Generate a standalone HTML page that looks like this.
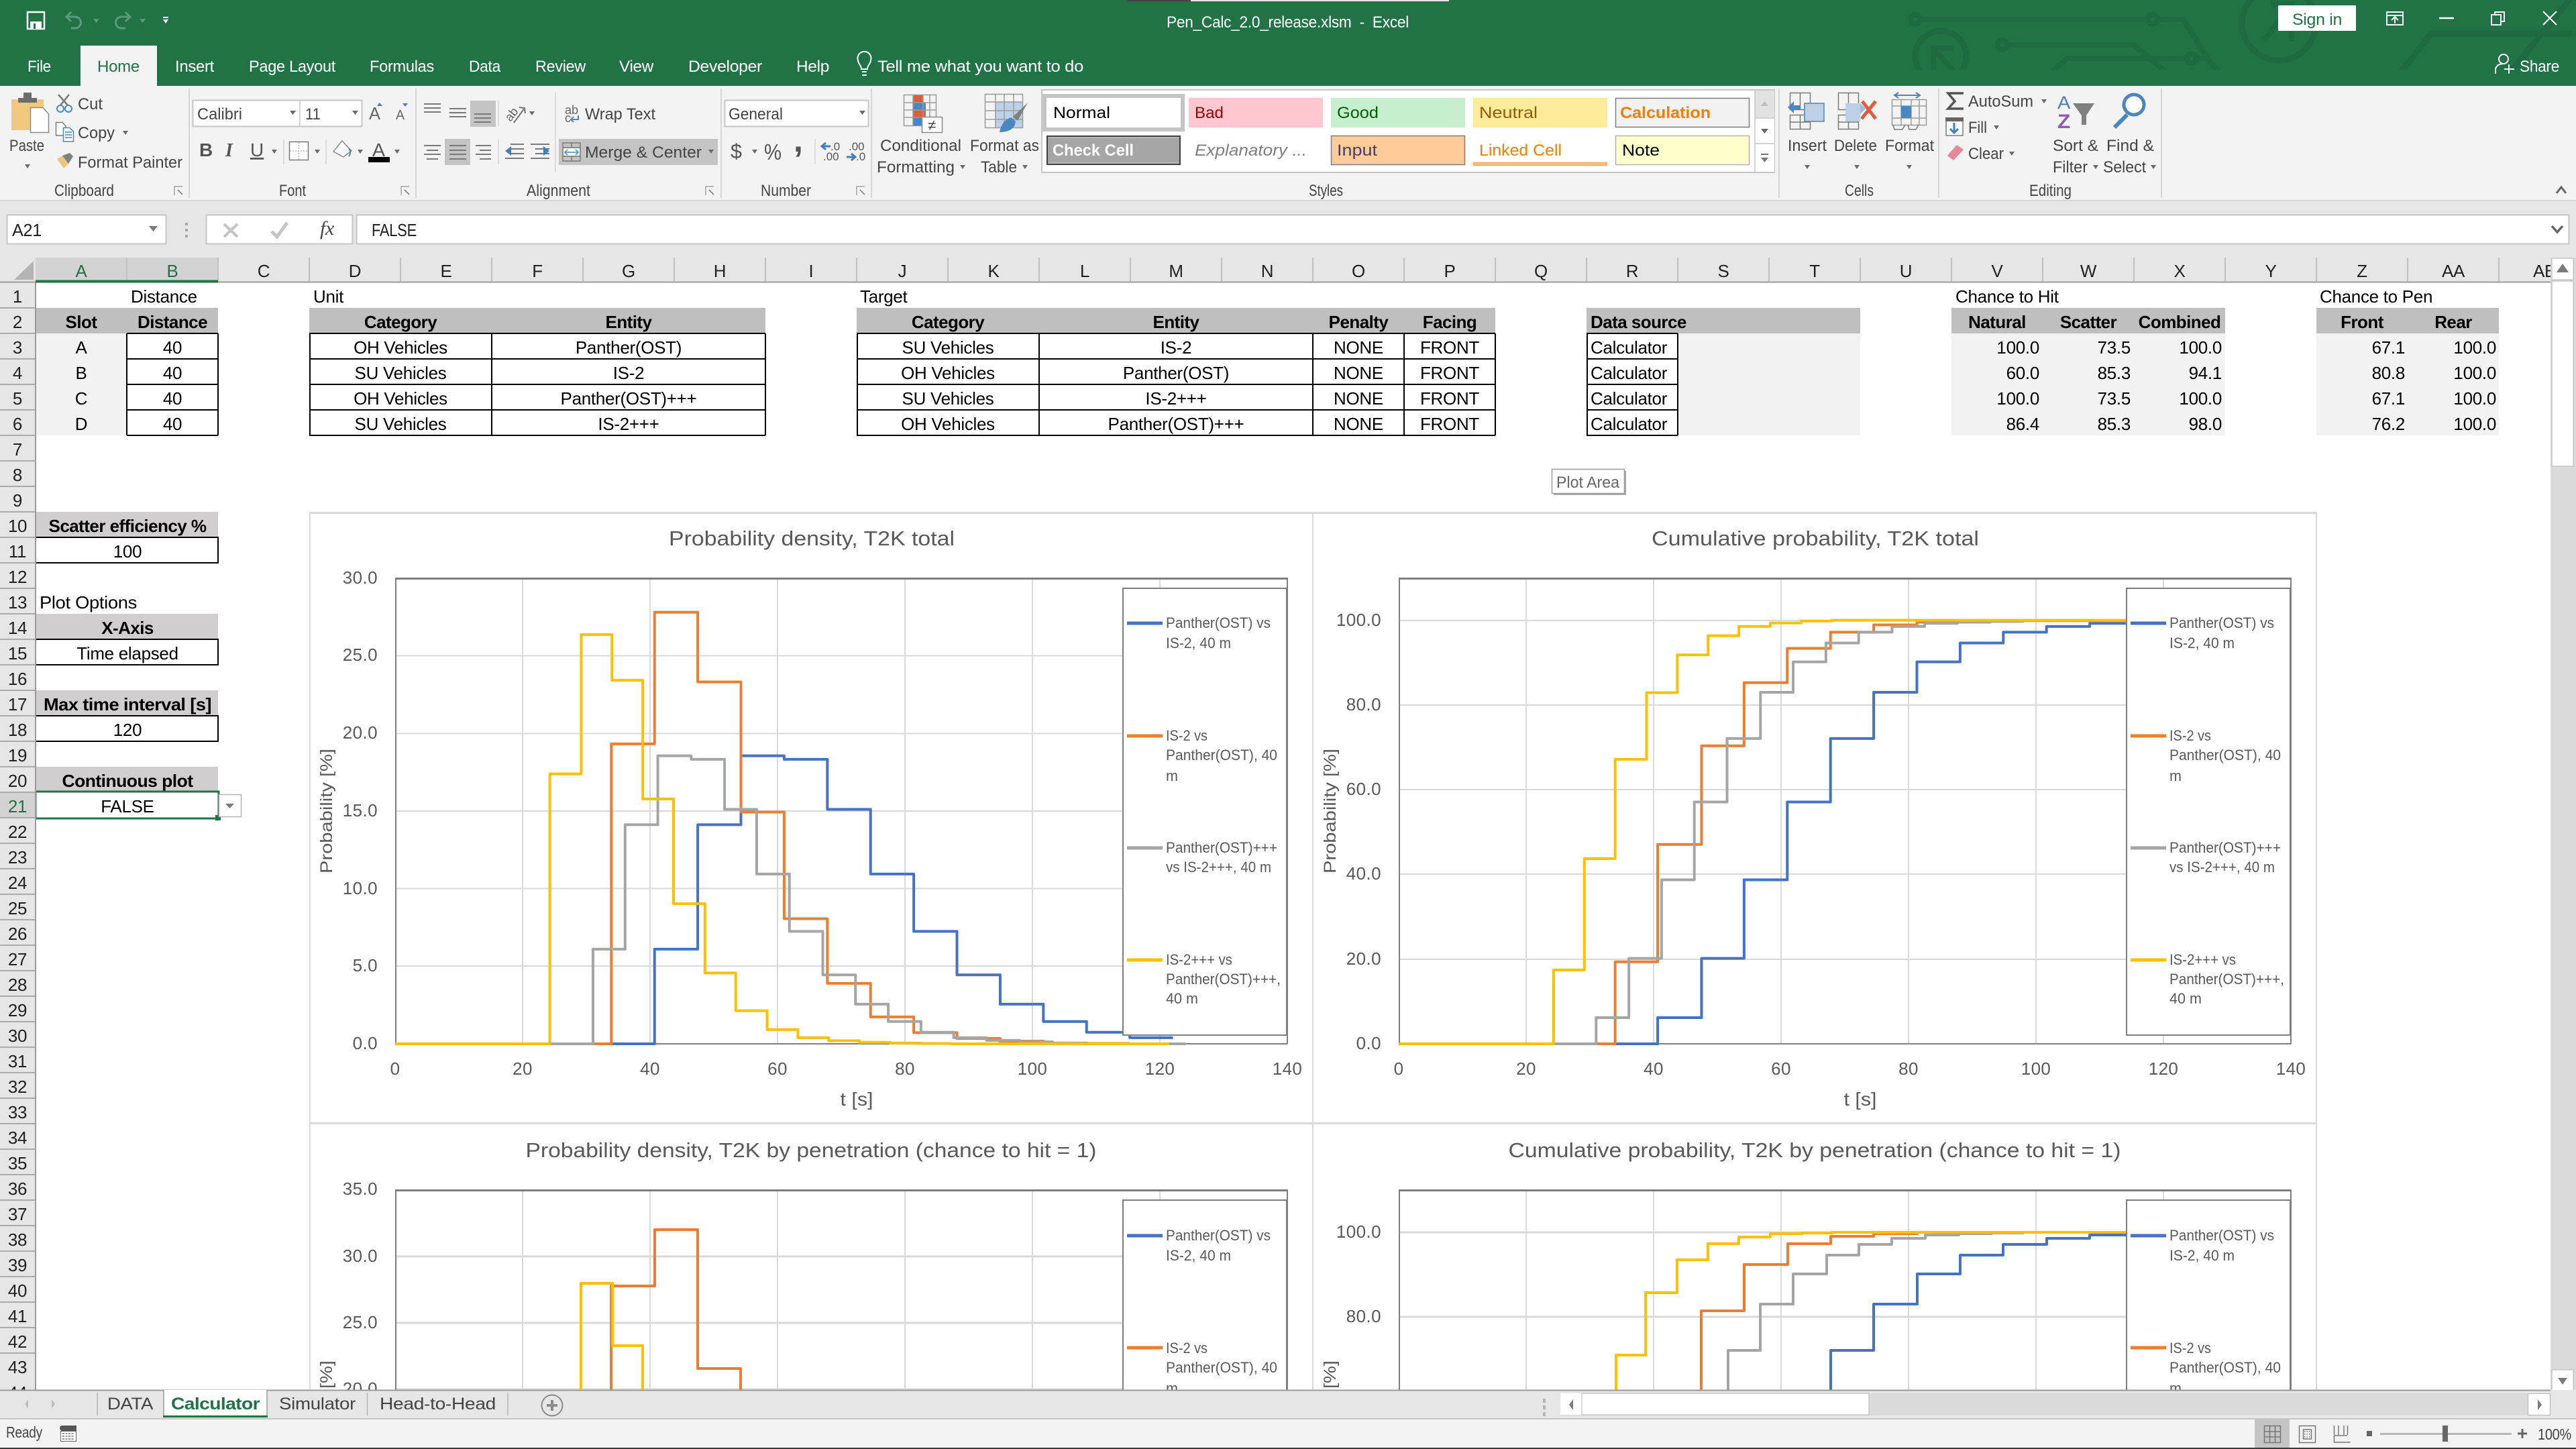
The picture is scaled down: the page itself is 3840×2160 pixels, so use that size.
<!DOCTYPE html>
<html><head><meta charset="utf-8"><title>Pen_Calc_2.0_release.xlsm - Excel</title>
<style>
html,body{margin:0;padding:0;background:#fff;width:3840px;height:2160px;overflow:hidden}
svg{display:block;position:absolute;left:0;top:0}
text{font-family:"Liberation Sans",sans-serif;font-size:26px;fill:#000;letter-spacing:-.3px;white-space:pre}
.c{text-anchor:middle}.r{text-anchor:end}
.b{font-weight:bold;letter-spacing:-.55px}
.w{fill:#fff;font-size:24px}
.t{font-size:24px;fill:#444;letter-spacing:0}
.g{font-size:24px;fill:#444;letter-spacing:0}
.h{fill:#222}
.k{fill:#595959;letter-spacing:.4px}
.l{fill:#595959;font-size:22px;letter-spacing:0}
.ti{fill:#595959;font-size:31px;letter-spacing:0}
.s{fill:none;stroke-linejoin:miter;stroke-linecap:butt}
.cv{fill:none;stroke-width:4;vector-effect:non-scaling-stroke;stroke-linejoin:round}
</style></head><body>
<svg xmlns="http://www.w3.org/2000/svg" width="3840" height="2160" viewBox="0 0 3840 2160">
<defs>
<clipPath id="tb"><rect x="2800" y="0" width="1040" height="104"/></clipPath>
<clipPath id="sh"><rect x="0" y="0" width="3802" height="2072"/></clipPath>
</defs>
<rect width="3840" height="2160" fill="#fff"/>

<!-- ======= sheet cells ======= -->
<g id="cells">
<rect x="53" y="459" width="272" height="38" fill="#bfbfbf"/>
<rect x="53" y="497" width="136" height="152" fill="#f2f2f2"/>
<rect x="461" y="459" width="680" height="38" fill="#bfbfbf"/>
<rect x="1277" y="459" width="952" height="38" fill="#bfbfbf"/>
<rect x="2365" y="459" width="408" height="38" fill="#bfbfbf"/>
<rect x="2501" y="497" width="272" height="152" fill="#f2f2f2"/>
<rect x="2909" y="459" width="408" height="38" fill="#bfbfbf"/>
<rect x="2909" y="497" width="408" height="152" fill="#f2f2f2"/>
<rect x="3453" y="459" width="272" height="38" fill="#bfbfbf"/>
<rect x="3453" y="497" width="272" height="152" fill="#f2f2f2"/>
<path class="s" stroke="#000" stroke-width="2" d="M189 497H325M189 535H325M189 573H325M189 611H325M189 649H325M189 497V649M325 497V649M461 497H1141M461 535H1141M461 573H1141M461 611H1141M461 649H1141M462 497V649M733 497V649M1141 497V649M1277 497H2229M1277 535H2229M1277 573H2229M1277 611H2229M1277 649H2229M1278 497V649M1549 497V649M1957 497V649M2093 497V649M2229 497V649M2365 497H2501M2365 535H2501M2365 573H2501M2365 611H2501M2365 649H2501M2366 497V649M2501 497V649"/>

<text x="195" y="451">Distance</text>
<text x="467" y="451">Unit</text>
<text x="1282" y="451">Target</text>
<text x="2915" y="451">Chance to Hit</text>
<text x="3458" y="451">Chance to Pen</text>

<g class="c">
<text class="c b" x="121" y="489">Slot</text><text class="c b" x="257" y="489">Distance</text>
<text class="c b" x="597" y="489">Category</text><text class="c b" x="937" y="489">Entity</text>
<text class="c b" x="1413" y="489">Category</text><text class="c b" x="1753" y="489">Entity</text>
<text class="c b" x="2025" y="489">Penalty</text><text class="c b" x="2161" y="489">Facing</text>
<text class="c b" x="2977" y="489">Natural</text><text class="c b" x="3113" y="489">Scatter</text><text class="c b" x="3249" y="489">Combined</text>
<text class="c b" x="3521" y="489">Front</text><text class="c b" x="3657" y="489">Rear</text>
<text class="c" x="121" y="527">A</text><text class="c" x="121" y="565">B</text><text class="c" x="121" y="603">C</text><text class="c" x="121" y="641">D</text>
<text class="c" x="257" y="527">40</text><text class="c" x="257" y="565">40</text><text class="c" x="257" y="603">40</text><text class="c" x="257" y="641">40</text>
<text class="c" x="597" y="527">OH Vehicles</text><text class="c" x="597" y="565">SU Vehicles</text><text class="c" x="597" y="603">OH Vehicles</text><text class="c" x="597" y="641">SU Vehicles</text>
<text class="c" x="937" y="527">Panther(OST)</text><text class="c" x="937" y="565">IS-2</text><text class="c" x="937" y="603">Panther(OST)+++</text><text class="c" x="937" y="641">IS-2+++</text>
<text class="c" x="1413" y="527">SU Vehicles</text><text class="c" x="1413" y="565">OH Vehicles</text><text class="c" x="1413" y="603">SU Vehicles</text><text class="c" x="1413" y="641">OH Vehicles</text>
<text class="c" x="1753" y="527">IS-2</text><text class="c" x="1753" y="565">Panther(OST)</text><text class="c" x="1753" y="603">IS-2+++</text><text class="c" x="1753" y="641">Panther(OST)+++</text>
<text class="c" x="2025" y="527">NONE</text><text class="c" x="2025" y="565">NONE</text><text class="c" x="2025" y="603">NONE</text><text class="c" x="2025" y="641">NONE</text>
<text class="c" x="2161" y="527">FRONT</text><text class="c" x="2161" y="565">FRONT</text><text class="c" x="2161" y="603">FRONT</text><text class="c" x="2161" y="641">FRONT</text>
</g>
<text class="b" x="2371" y="489">Data source</text>
<text x="2371" y="527">Calculator</text><text x="2371" y="565">Calculator</text><text x="2371" y="603">Calculator</text><text x="2371" y="641">Calculator</text>
<text class="r" x="3040" y="527">100.0</text><text class="r" x="3040" y="565">60.0</text><text class="r" x="3040" y="603">100.0</text><text class="r" x="3040" y="641">86.4</text>
<text class="r" x="3176" y="527">73.5</text><text class="r" x="3176" y="565">85.3</text><text class="r" x="3176" y="603">73.5</text><text class="r" x="3176" y="641">85.3</text>
<text class="r" x="3312" y="527">100.0</text><text class="r" x="3312" y="565">94.1</text><text class="r" x="3312" y="603">100.0</text><text class="r" x="3312" y="641">98.0</text>
<text class="r" x="3585" y="527">67.1</text><text class="r" x="3585" y="565">80.8</text><text class="r" x="3585" y="603">67.1</text><text class="r" x="3585" y="641">76.2</text>
<text class="r" x="3721" y="527">100.0</text><text class="r" x="3721" y="565">100.0</text><text class="r" x="3721" y="603">100.0</text><text class="r" x="3721" y="641">100.0</text>

<!-- left option blocks -->
<rect x="54" y="763" width="271" height="38" fill="#d0cece"/>
<rect x="54" y="915" width="271" height="38" fill="#d0cece"/>
<rect x="54" y="1029" width="271" height="38" fill="#d0cece"/>
<rect x="54" y="1143" width="271" height="38" fill="#d0cece"/>
<path class="s" stroke="#000" stroke-width="2" d="M54 801H325V839H54M54 953H325V991H54M54 1067H325V1105H54"/>
<text class="c b" x="190" y="793" textLength="235" lengthAdjust="spacingAndGlyphs">Scatter efficiency %</text>
<text class="c" x="190" y="831">100</text>
<text x="59" y="907" textLength="145" lengthAdjust="spacingAndGlyphs">Plot Options</text>
<text class="c b" x="190" y="945">X-Axis</text>
<text class="c" x="190" y="983">Time elapsed</text>
<text class="c b" x="190" y="1059" textLength="250" lengthAdjust="spacingAndGlyphs">Max time interval [s]</text>
<text class="c" x="190" y="1097">120</text>
<text class="c b" x="190" y="1173" textLength="195" lengthAdjust="spacingAndGlyphs">Continuous plot</text>
<text class="c" x="190" y="1211">FALSE</text>
<rect x="53" y="1180" width="273" height="40" fill="none" stroke="#217346" stroke-width="3"/>
<rect x="321" y="1215" width="8" height="8" fill="#217346"/>
<rect x="326.500" y="1184.500" width="33" height="33" fill="#fff" stroke="#b5b5b5" stroke-width="1.5"/>
<path d="M336 1198h13l-6.500 7z" fill="#7a7a7a"/>

<!-- Plot Area tooltip -->
<rect x="2316" y="702" width="108" height="36" fill="#aaa"/>
<rect x="2313.500" y="699.500" width="108" height="36" fill="#fff" stroke="#9a9a9a" stroke-width="1.500"/>
<text class="c" x="2367" y="727" style="font-size:24px;fill:#666;letter-spacing:0" textLength="94" lengthAdjust="spacingAndGlyphs">Plot Area</text>
</g>

<!-- ======= charts ======= -->
<g clip-path="url(#sh)">
<path class="s" stroke="#d9d9d9" stroke-width="2" d="M462 763V2072M1957 763V2072M3453 763V2072"/>
<path class="s" stroke="#d9d9d9" stroke-width="3" d="M461 764.500H3454M461 1674.500H3454"/>

<!-- chart 1 -->
<text class="c ti" x="1210" y="813" textLength="426" lengthAdjust="spacingAndGlyphs">Probability density, T2K total</text>
<path class="s" stroke="#d9d9d9" stroke-width="2" d="M779 862V1556M969 862V1556M1159 862V1556M1349 862V1556M1539 862V1556M1729 862V1556M589 977.500H1919M589 1093.500H1919M589 1209H1919M589 1324.500H1919M589 1440H1919"/>
<path class="s" stroke="#7f7f7f" stroke-width="2" d="M590 862V1556M1919 862V1556M589 1556H1919"/>
<path class="s" stroke="#7f7f7f" stroke-width="3" d="M589 862.500H1920"/>
<g transform="translate(440,780) scale(.9758,.57398)">
<path class="cv" stroke="#4472c4" d="M153 1352H549V1106H615V783H681V604H747V613H813V743H879V911H945V1060H1011V1173H1077V1249H1143V1294H1209V1322H1275V1336H1341"/>
<path class="cv" stroke="#ed7d31" d="M153 1352H483V573H549V231H615V412H681V750H747V1027H813V1195H879V1282H945V1323H1011V1338H1077V1345H1143V1350H1209V1351H1275"/>
<path class="cv" stroke="#a5a5a5" d="M153 1352H455V1106H504V783H554V604H605V613H656V743H705V911H755V1060H806V1173H856V1249H906V1294H956V1322H1006V1336H1056V1343H1107V1347H1157V1350H1207V1352H1360"/>
<path class="cv" stroke="#ffc000" d="M153 1352H389V651H437V289H484V408H531V716H578V988H626V1168H673V1266H721V1315H768V1336H815V1344H862V1348H909V1350H956V1351H1003V1352H1335"/>
</g>
<rect x="1674" y="877" width="244" height="666" fill="#fff" stroke="#7f7f7f" stroke-width="2"/>
<path class="s" stroke-width="5" stroke="#4472c4" d="M1680 929H1733"/><path class="s" stroke-width="5" stroke="#ed7d31" d="M1680 1097H1733"/><path class="s" stroke-width="5" stroke="#a5a5a5" d="M1680 1264H1733"/><path class="s" stroke-width="5" stroke="#ffc000" d="M1680 1431H1733"/>
<text class="l" x="1738" y="936" textLength="156" lengthAdjust="spacingAndGlyphs">Panther(OST) vs</text>
<text class="l" x="1738" y="966" textLength="97" lengthAdjust="spacingAndGlyphs">IS-2, 40 m</text>
<text class="l" x="1738" y="1104" textLength="62" lengthAdjust="spacingAndGlyphs">IS-2 vs</text>
<text class="l" x="1738" y="1133" textLength="166" lengthAdjust="spacingAndGlyphs">Panther(OST), 40</text>
<text class="l" x="1738" y="1164" textLength="18" lengthAdjust="spacingAndGlyphs">m</text>
<text class="l" x="1738" y="1271" textLength="166" lengthAdjust="spacingAndGlyphs">Panther(OST)+++</text>
<text class="l" x="1738" y="1300" textLength="157" lengthAdjust="spacingAndGlyphs">vs IS-2+++, 40 m</text>
<text class="l" x="1738" y="1438" textLength="99" lengthAdjust="spacingAndGlyphs">IS-2+++ vs</text>
<text class="l" x="1738" y="1467" textLength="171" lengthAdjust="spacingAndGlyphs">Panther(OST)+++,</text>
<text class="l" x="1738" y="1496" textLength="48" lengthAdjust="spacingAndGlyphs">40 m</text>
<g>
<text class="r k" x="563" y="870">30.0</text><text class="r k" x="563" y="985">25.0</text><text class="r k" x="563" y="1101">20.0</text><text class="r k" x="563" y="1217">15.0</text><text class="r k" x="563" y="1333">10.0</text><text class="r k" x="563" y="1448">5.0</text><text class="r k" x="563" y="1564">0.0</text>
<text class="c k" x="589" y="1602">0</text><text class="c k" x="779" y="1602">20</text><text class="c k" x="969" y="1602">40</text><text class="c k" x="1159" y="1602">60</text><text class="c k" x="1349" y="1602">80</text><text class="c k" x="1539" y="1602">100</text><text class="c k" x="1729" y="1602">120</text><text class="c k" x="1919" y="1602">140</text>
<text class="c k" x="1277" y="1648" style="font-size:28px;letter-spacing:0" textLength="49" lengthAdjust="spacingAndGlyphs">t [s]</text>
<text class="c k" transform="translate(495,1209) rotate(-90)" style="letter-spacing:0;font-size:25px" textLength="186" lengthAdjust="spacingAndGlyphs">Probability [%]</text>
</g>

<!-- chart 2 -->
<text class="c ti" x="2706" y="813" textLength="488" lengthAdjust="spacingAndGlyphs">Cumulative probability, T2K total</text>
<path class="s" stroke="#d9d9d9" stroke-width="2" d="M2275 862V1556M2465 862V1556M2655 862V1556M2845 862V1556M3035 862V1556M3225 862V1556M2085 925H3415M2085 1051H3415M2085 1177H3415M2085 1303H3415M2085 1430H3415"/>
<path class="s" stroke="#7f7f7f" stroke-width="2" d="M2086 862V1556M3415 862V1556M2085 1556H3415"/>
<path class="s" stroke="#7f7f7f" stroke-width="3" d="M2085 862.500H3416"/>
<g transform="translate(1950,780) scale(.9758,.57398)">
<path class="cv" stroke="#4472c4" d="M139 1352H534V1284H601V1130H666V926H732V724H798V559H864V439H930V360H996V311H1062V283H1128V268H1194V260H1249"/>
<path class="cv" stroke="#ed7d31" d="M139 1352H469V1139H534V834H601V578H666V414H732V325H798V283H864V264H930V257H996V254H1062V253H1249"/>
<path class="cv" stroke="#a5a5a5" d="M139 1352H440V1284H490V1130H540V926H590V724H640V559H691V439H741V360H791V311H841V283H892V268H942V260H992V257H1042V255H1093"/>
<path class="cv" stroke="#ffc000" d="M139 1352H375V1160H422V871H469V613H517V440H564V342H611V292H658V268H706V259H753V254H800V252H1249"/>
</g>
<rect x="3170" y="877" width="244" height="666" fill="#fff" stroke="#7f7f7f" stroke-width="2"/>
<path class="s" stroke-width="5" stroke="#4472c4" d="M3176 929H3229"/><path class="s" stroke-width="5" stroke="#ed7d31" d="M3176 1097H3229"/><path class="s" stroke-width="5" stroke="#a5a5a5" d="M3176 1264H3229"/><path class="s" stroke-width="5" stroke="#ffc000" d="M3176 1431H3229"/>
<text class="l" x="3234" y="936" textLength="156" lengthAdjust="spacingAndGlyphs">Panther(OST) vs</text>
<text class="l" x="3234" y="966" textLength="97" lengthAdjust="spacingAndGlyphs">IS-2, 40 m</text>
<text class="l" x="3234" y="1104" textLength="62" lengthAdjust="spacingAndGlyphs">IS-2 vs</text>
<text class="l" x="3234" y="1133" textLength="166" lengthAdjust="spacingAndGlyphs">Panther(OST), 40</text>
<text class="l" x="3234" y="1164" textLength="18" lengthAdjust="spacingAndGlyphs">m</text>
<text class="l" x="3234" y="1271" textLength="166" lengthAdjust="spacingAndGlyphs">Panther(OST)+++</text>
<text class="l" x="3234" y="1300" textLength="157" lengthAdjust="spacingAndGlyphs">vs IS-2+++, 40 m</text>
<text class="l" x="3234" y="1438" textLength="99" lengthAdjust="spacingAndGlyphs">IS-2+++ vs</text>
<text class="l" x="3234" y="1467" textLength="171" lengthAdjust="spacingAndGlyphs">Panther(OST)+++,</text>
<text class="l" x="3234" y="1496" textLength="48" lengthAdjust="spacingAndGlyphs">40 m</text>
<text class="r k" x="2059" y="933">100.0</text><text class="r k" x="2059" y="1059">80.0</text><text class="r k" x="2059" y="1185">60.0</text><text class="r k" x="2059" y="1311">40.0</text><text class="r k" x="2059" y="1438">20.0</text><text class="r k" x="2059" y="1564">0.0</text>
<text class="c k" x="2085" y="1602">0</text><text class="c k" x="2275" y="1602">20</text><text class="c k" x="2465" y="1602">40</text><text class="c k" x="2655" y="1602">60</text><text class="c k" x="2845" y="1602">80</text><text class="c k" x="3035" y="1602">100</text><text class="c k" x="3225" y="1602">120</text><text class="c k" x="3415" y="1602">140</text>
<text class="c k" x="2773" y="1648" style="font-size:28px;letter-spacing:0" textLength="49" lengthAdjust="spacingAndGlyphs">t [s]</text>
<text class="c k" transform="translate(1991,1209) rotate(-90)" style="letter-spacing:0;font-size:25px" textLength="186" lengthAdjust="spacingAndGlyphs">Probability [%]</text>

<!-- chart 3 -->
<text class="c ti" x="1209" y="1725" textLength="851" lengthAdjust="spacingAndGlyphs">Probability density, T2K by penetration (chance to hit = 1)</text>
<path class="s" stroke="#d9d9d9" stroke-width="2" d="M779 1774V2072M969 1774V2072M1159 1774V2072M1349 1774V2072M1539 1774V2072M1729 1774V1790"/>
<path class="s" stroke="#d9d9d9" stroke-width="3" d="M589 1873H1674M589 1972H1674M589 2071H1674"/>
<path class="s" stroke="#7f7f7f" stroke-width="2" d="M590 1774V2072M1919 1774V2072"/>
<path class="s" stroke="#7f7f7f" stroke-width="3" d="M589 1774.500H1920"/>
<path class="cv" stroke="#ed7d31" d="M911 2072V1917H976V1833H1040V2040H1104V2072"/>
<path class="cv" stroke="#ffc000" d="M866 2072V1913H913V2006H958V2072"/>
<rect x="1674" y="1789" width="244" height="300" fill="#fff" stroke="#7f7f7f" stroke-width="2"/>
<path class="s" stroke-width="5" stroke="#4472c4" d="M1680 1842H1733"/><path class="s" stroke-width="5" stroke="#ed7d31" d="M1680 2009H1733"/>
<text class="l" x="1738" y="1849" textLength="156" lengthAdjust="spacingAndGlyphs">Panther(OST) vs</text>
<text class="l" x="1738" y="1879" textLength="97" lengthAdjust="spacingAndGlyphs">IS-2, 40 m</text>
<text class="l" x="1738" y="2017" textLength="62" lengthAdjust="spacingAndGlyphs">IS-2 vs</text>
<text class="l" x="1738" y="2046" textLength="166" lengthAdjust="spacingAndGlyphs">Panther(OST), 40</text>
<text class="l" x="1738" y="2077" textLength="18" lengthAdjust="spacingAndGlyphs">m</text>
<text class="r k" x="563" y="1781">35.0</text><text class="r k" x="563" y="1881">30.0</text><text class="r k" x="563" y="1980">25.0</text><text class="r k" x="563" y="2079">20.0</text>
<text class="c k" transform="translate(495,2121) rotate(-90)" style="letter-spacing:0;font-size:25px" textLength="186" lengthAdjust="spacingAndGlyphs">Probability [%]</text>

<!-- chart 4 -->
<text class="c ti" x="2705" y="1725" textLength="913" lengthAdjust="spacingAndGlyphs">Cumulative probability, T2K by penetration (chance to hit = 1)</text>
<path class="s" stroke="#d9d9d9" stroke-width="2" d="M2275 1774V2072M2465 1774V2072M2655 1774V2072M2845 1774V2072M3035 1774V2072M3225 1774V1790"/>
<path class="s" stroke="#d9d9d9" stroke-width="3" d="M2085 1837H3170M2085 1963H3170"/>
<path class="s" stroke="#7f7f7f" stroke-width="2" d="M2086 1774V2072M3415 1774V2072"/>
<path class="s" stroke="#7f7f7f" stroke-width="3" d="M2085 1774.500H3416"/>
<path class="cv" stroke="#4472c4" d="M2729 2072V2013H2793V1944H2858V1899H2922V1871H2986V1855H3051V1846H3115V1841H3170"/>
<path class="cv" stroke="#a5a5a5" d="M2576 2072V2013H2624V1944H2673V1899H2723V1871H2771V1855H2820V1846H2870V1841H2920V1839H2969V1838H3017"/>
<path class="cv" stroke="#ed7d31" d="M2536 2072V1954H2600V1885H2665V1854H2729V1843H2793V1839H2858V1837H3170"/>
<path class="cv" stroke="#ffc000" d="M2409 2072V2020H2453V1927H2500V1878H2546V1854H2592V1844H2639V1839H2686V1838H2731V1837H3170"/>
<rect x="3170" y="1789" width="244" height="300" fill="#fff" stroke="#7f7f7f" stroke-width="2"/>
<path class="s" stroke-width="5" stroke="#4472c4" d="M3176 1842H3229"/><path class="s" stroke-width="5" stroke="#ed7d31" d="M3176 2009H3229"/>
<text class="l" x="3234" y="1849" textLength="156" lengthAdjust="spacingAndGlyphs">Panther(OST) vs</text>
<text class="l" x="3234" y="1879" textLength="97" lengthAdjust="spacingAndGlyphs">IS-2, 40 m</text>
<text class="l" x="3234" y="2017" textLength="62" lengthAdjust="spacingAndGlyphs">IS-2 vs</text>
<text class="l" x="3234" y="2046" textLength="166" lengthAdjust="spacingAndGlyphs">Panther(OST), 40</text>
<text class="l" x="3234" y="2077" textLength="18" lengthAdjust="spacingAndGlyphs">m</text>
<text class="r k" x="2059" y="1845">100.0</text><text class="r k" x="2059" y="1971">80.0</text>
<text class="c k" transform="translate(1991,2121) rotate(-90)" style="letter-spacing:0;font-size:25px" textLength="186" lengthAdjust="spacingAndGlyphs">Probability [%]</text>
</g>

<!-- ======= row headers ======= -->
<rect x="0" y="421" width="53" height="1651" fill="#e6e6e6"/>
<rect x="0" y="1181" width="53" height="38" fill="#d2d2d2"/>
<path class="s" stroke="#ababab" stroke-width="2" d="M0 459h53m-53 38h53m-53 38h53m-53 38h53m-53 38h53m-53 38h53m-53 38h53m-53 38h53m-53 38h53m-53 38h53m-53 38h53m-53 38h53m-53 38h53m-53 38h53m-53 38h53m-53 38h53m-53 38h53m-53 38h53m-53 38h53m-53 38h53m-53 38h53m-53 38h53m-53 38h53m-53 38h53m-53 38h53m-53 38h53m-53 38h53m-53 38h53m-53 38h53m-53 38h53m-53 38h53m-53 38h53m-53 38h53m-53 38h53m-53 38h53m-53 38h53m-53 38h53m-53 38h53m-53 38h53m-53 38h53m-53 38h53m-53 38h53"/>
<path class="s" stroke="#9b9b9b" stroke-width="2" d="M53 421V2072"/>
<g>
<text class="c h" x="26" y="451">1</text><text class="c h" x="26" y="489">2</text><text class="c h" x="26" y="527">3</text><text class="c h" x="26" y="565">4</text><text class="c h" x="26" y="603">5</text><text class="c h" x="26" y="641">6</text><text class="c h" x="26" y="679">7</text><text class="c h" x="26" y="717">8</text><text class="c h" x="26" y="755">9</text><text class="c h" x="26" y="793">10</text><text class="c h" x="26" y="831">11</text><text class="c h" x="26" y="869">12</text><text class="c h" x="26" y="907">13</text><text class="c h" x="26" y="945">14</text><text class="c h" x="26" y="983">15</text><text class="c h" x="26" y="1021">16</text><text class="c h" x="26" y="1059">17</text><text class="c h" x="26" y="1097">18</text><text class="c h" x="26" y="1135">19</text><text class="c h" x="26" y="1173">20</text><text class="c" style="fill:#217346" x="26" y="1211">21</text><text class="c h" x="26" y="1249">22</text><text class="c h" x="26" y="1287">23</text><text class="c h" x="26" y="1325">24</text><text class="c h" x="26" y="1363">25</text><text class="c h" x="26" y="1401">26</text><text class="c h" x="26" y="1439">27</text><text class="c h" x="26" y="1477">28</text><text class="c h" x="26" y="1515">29</text><text class="c h" x="26" y="1553">30</text><text class="c h" x="26" y="1591">31</text><text class="c h" x="26" y="1629">32</text><text class="c h" x="26" y="1667">33</text><text class="c h" x="26" y="1705">34</text><text class="c h" x="26" y="1743">35</text><text class="c h" x="26" y="1781">36</text><text class="c h" x="26" y="1819">37</text><text class="c h" x="26" y="1857">38</text><text class="c h" x="26" y="1895">39</text><text class="c h" x="26" y="1933">40</text><text class="c h" x="26" y="1971">41</text><text class="c h" x="26" y="2009">42</text><text class="c h" x="26" y="2047">43</text><text class="c h" x="26" y="2085">44</text>
</g>

<!-- ======= col headers ======= -->
<rect x="0" y="300" width="3840" height="121" fill="#e6e6e6"/>
<rect x="53" y="384" width="272" height="36" fill="#d2d2d2"/>
<path d="M50 389V417H21z" fill="#b5b5b5"/>
<path class="s" stroke="#c2c2c2" stroke-width="2" d="M189 384v36m136-36v36m136-36v36m136-36v36m136-36v36m136-36v36m136-36v36m136-36v36m136-36v36m136-36v36m136-36v36m136-36v36m136-36v36m136-36v36m136-36v36m136-36v36m136-36v36m136-36v36m136-36v36m136-36v36m136-36v36m136-36v36m136-36v36m136-36v36m136-36v36m136-36v36m136-36v36"/>
<path class="s" stroke="#9b9b9b" stroke-width="2" d="M0 420.500H3802"/>
<path class="s" stroke="#217346" stroke-width="4" d="M53 419.500H325"/>
<text class="c" style="fill:#217346" x="121" y="413">A</text><text class="c" style="fill:#217346" x="257" y="413">B</text>
<g>
<text class="c h" x="393" y="413">C</text><text class="c h" x="529" y="413">D</text><text class="c h" x="665" y="413">E</text><text class="c h" x="801" y="413">F</text><text class="c h" x="937" y="413">G</text><text class="c h" x="1073" y="413">H</text><text class="c h" x="1209" y="413">I</text><text class="c h" x="1345" y="413">J</text><text class="c h" x="1481" y="413">K</text><text class="c h" x="1617" y="413">L</text><text class="c h" x="1753" y="413">M</text><text class="c h" x="1889" y="413">N</text><text class="c h" x="2025" y="413">O</text><text class="c h" x="2161" y="413">P</text><text class="c h" x="2297" y="413">Q</text><text class="c h" x="2433" y="413">R</text><text class="c h" x="2569" y="413">S</text><text class="c h" x="2705" y="413">T</text><text class="c h" x="2841" y="413">U</text><text class="c h" x="2977" y="413">V</text><text class="c h" x="3113" y="413">W</text><text class="c h" x="3249" y="413">X</text><text class="c h" x="3385" y="413">Y</text><text class="c h" x="3521" y="413">Z</text><text class="c h" x="3657" y="413">AA</text><text class="c h" x="3793" y="413">AB</text>
</g>

<!-- ======= formula bar ======= -->
<rect x="10.500" y="320.500" width="237" height="43" fill="#fff" stroke="#c6c6c6" stroke-width="2"/>
<text x="18" y="352" textLength="44" lengthAdjust="spacingAndGlyphs" style="fill:#222">A21</text>
<path d="M222 337h13l-6.500 8z" fill="#7a7a7a"/>
<path d="M276 332h4v4h-4zM276 341h4v4h-4zM276 350h4v4h-4z" fill="#a8a8a8"/>
<rect x="307.500" y="320.500" width="218" height="43" fill="#fff" stroke="#c6c6c6" stroke-width="2"/>
<path class="s" stroke="#c4c4c4" stroke-width="4" d="M334 334l20 19M354 334l-20 19"/>
<path class="s" stroke="#c4c4c4" stroke-width="5" d="M405 345l8 8 15-21"/>
<text x="477" y="350" style="font-family:'Liberation Serif',serif;font-style:italic;font-size:30px;fill:#444">fx</text>
<rect x="531.500" y="320.500" width="3298" height="43" fill="#fff" stroke="#c6c6c6" stroke-width="2"/>
<text x="554" y="352" textLength="67" lengthAdjust="spacingAndGlyphs" style="fill:#222">FALSE</text>
<path class="s" stroke="#666" stroke-width="3.500" d="M3804 337l8 9 8-9"/>

<!-- ======= ribbon ======= -->
<rect x="0" y="128" width="3840" height="171" fill="#f3f3f3"/>
<path class="s" stroke="#d4d4d4" stroke-width="2" d="M0 299H3840"/>
<path class="s" stroke="#d6d6d6" stroke-width="2" d="M282 132V295M620 132V295M1075 132V295M1299 132V295M2652 132V295M2890 132V295M3222 132V295"/>
<path class="s" stroke="#d6d6d6" stroke-width="1.500" d="M423 208V245M486 208V245M743 150V188M743 208V245M828 138V257M1215 207V245"/>

<text class="g" x="81" y="292" textLength="89" lengthAdjust="spacingAndGlyphs">Clipboard</text>
<text class="g" x="416" y="292" textLength="40" lengthAdjust="spacingAndGlyphs">Font</text>
<text class="g" x="785" y="292" textLength="95" lengthAdjust="spacingAndGlyphs">Alignment</text>
<text class="g" x="1134" y="292" textLength="75" lengthAdjust="spacingAndGlyphs">Number</text>
<text class="g" x="1951" y="292" textLength="51" lengthAdjust="spacingAndGlyphs">Styles</text>
<text class="g" x="2750" y="292" textLength="43" lengthAdjust="spacingAndGlyphs">Cells</text>
<text class="g" x="3025" y="292" textLength="63" lengthAdjust="spacingAndGlyphs">Editing</text>
<path class="s" stroke="#a5a5a5" stroke-width="1.500" d="M260 291V278H272M598 291V278H610M1052 291V278H1064M1277 291V278H1289"/>
<path class="s" stroke="#777" stroke-width="1.500" d="M265 283l7 7M603 283l7 7M1057 283l7 7M1282 283l7 7"/>
<path class="s" stroke="#666" stroke-width="3" d="M3811 288l7-9 7 9"/>

<!-- clipboard -->
<rect x="17" y="148" width="48" height="46" rx="2" fill="#f0c87f"/>
<path d="M27 153V146H35V138H47V146H55V153z" fill="#6d6d6d"/>
<path d="M45.500 160.500H64L72.500 170V197.500H45.500z" fill="#fff" stroke="#8a8a8a" stroke-width="1.500"/>
<text class="t" x="14" y="225" textLength="52" lengthAdjust="spacingAndGlyphs">Paste</text>
<path class="s" stroke="#7a7a7a" stroke-width="2.500" d="M87 141L101 157M103 141L90 157"/>
<circle cx="90" cy="162" r="5" fill="none" stroke="#4a86c0" stroke-width="2"/><circle cx="102" cy="162" r="5" fill="none" stroke="#4a86c0" stroke-width="2"/>
<text class="t" x="116" y="163" textLength="37" lengthAdjust="spacingAndGlyphs">Cut</text>
<path d="M83.500 182.500H93L98 188V202H83.500z" fill="#fff" stroke="#7a7a7a" stroke-width="1.500"/>
<path d="M94.500 190.500H104L109.500 196V211H94.500z" fill="#fff" stroke="#4a86c0" stroke-width="1.500"/>
<path class="s" stroke="#4a86c0" stroke-width="1.500" d="M97 197h10M97 201h10M97 205h10"/>
<text class="t" x="116" y="206" textLength="55" lengthAdjust="spacingAndGlyphs">Copy</text>
<path d="M85 237L93 232L102 244L95 251z" fill="#eec27f"/><path d="M93 232L104 228L109 233L102 244z" fill="#808080"/>
<text class="t" x="116" y="250" textLength="156" lengthAdjust="spacingAndGlyphs">Format Painter</text>

<!-- font group -->
<rect x="287.500" y="149.500" width="252" height="39" fill="#fff" stroke="#c6c6c6" stroke-width="2"/>
<path class="s" stroke="#c6c6c6" stroke-width="1.500" d="M447 150V188"/>
<text class="t" x="294" y="178" textLength="67" lengthAdjust="spacingAndGlyphs">Calibri</text>
<text class="t" x="455" y="178" textLength="23" lengthAdjust="spacingAndGlyphs">11</text>
<text class="t" x="550" y="178" textLength="17" lengthAdjust="spacingAndGlyphs" style="fill:#666;font-size:26px">A</text>
<text class="t" x="590" y="178" textLength="13" lengthAdjust="spacingAndGlyphs" style="fill:#666;font-size:20px">A</text>
<path d="M562 158h8l-4-5zM600 154h8l-4 5z" fill="#4a7fba"/>
<text class="b" x="297" y="233" style="font-size:28px;fill:#555;letter-spacing:0">B</text>
<text x="336" y="233" style="font-family:'Liberation Serif',serif;font-style:italic;font-size:28px;font-weight:bold;fill:#555;letter-spacing:0">I</text>
<text x="373" y="233" style="font-size:28px;fill:#555;letter-spacing:0;text-decoration:underline">U</text>
<rect x="431.500" y="211.500" width="28" height="27" fill="#fff" stroke="#7a7a7a" stroke-width="1.500"/>
<path class="s" stroke="#9b9b9b" stroke-width="1" stroke-dasharray="2 2" d="M445.500 212V238M432 225H459"/>
<path d="M497 226L510 210L524 225L512 234z" fill="#fff" stroke="#8a8a8a" stroke-width="1.500"/>
<path class="s" stroke="#4a86c0" stroke-width="2" d="M520 221q4 7 0 12"/>
<text class="t" x="555" y="233" textLength="19" lengthAdjust="spacingAndGlyphs" style="fill:#555;font-size:28px">A</text>
<rect x="549" y="234" width="32" height="8"/>

<!-- alignment -->
<rect x="701" y="150" width="38" height="39" fill="#c4c4c4"/>
<rect x="663" y="207" width="38" height="39" fill="#c4c4c4"/>
<rect x="833" y="207" width="237" height="39" fill="#c4c4c4"/>
<path class="s" stroke="#7a7a7a" stroke-width="2" d="M632 155h25M632 161h25M632 167h25M670 162h25M670 168h25M670 174h25M707 170h25M707 176h25M707 182h25M632 217h25M636 224h17M632 230h25M636 237h17M670 217h25M670 224h25M670 230h25M670 237h25M709 217h23M715 224h17M709 230h23M715 237h17M761 215h20M761 222h20M761 229h20M753 236h28M791 215h28M798 222h21M798 229h21M791 236h28"/>
<path d="M753 225l9-7v14zM819 225l-9-7v14z" fill="#3f7fbf"/>
<text transform="translate(761,182) rotate(-52)" style="font-size:18px;fill:#666;letter-spacing:0">ab</text>
<path class="s" stroke="#777" stroke-width="2" d="M766 183l16-22M774 160l8 1 1 8"/>
<text x="842" y="170" style="font-size:18px;fill:#666;letter-spacing:0">ab</text>
<text x="842" y="182" style="font-size:18px;fill:#666;letter-spacing:0">c</text>
<path class="s" stroke="#4a86c0" stroke-width="2" d="M862 172v6h-10M855 174l-4 4 4 4"/>
<text class="t" x="872" y="178" textLength="105" lengthAdjust="spacingAndGlyphs">Wrap Text</text>
<path class="s" fill="#fff" stroke="#7a7a7a" stroke-width="1.500" d="M839 213h26v27h-26zM839 220h26M839 233h26M852 213v7M852 233v7"/>
<rect x="840" y="221" width="24" height="11" fill="#fff"/>
<path class="s" stroke="#4a86c0" stroke-width="1.500" d="M842 227h20M846 223l-4 4 4 4M858 223l4 4-4 4"/>
<text class="t" x="872" y="235" textLength="174" lengthAdjust="spacingAndGlyphs">Merge &amp; Center</text>

<!-- number -->
<rect x="1080.500" y="149.500" width="214" height="39" fill="#fff" stroke="#c6c6c6" stroke-width="2"/>
<text class="t" x="1086" y="178" textLength="81" lengthAdjust="spacingAndGlyphs">General</text>
<text x="1089" y="236" style="font-size:31px;fill:#555;letter-spacing:0" textLength="17" lengthAdjust="spacingAndGlyphs">$</text>
<text x="1139" y="238" style="font-size:33px;fill:#555;letter-spacing:0" textLength="26" lengthAdjust="spacingAndGlyphs">%</text>
<text class="b" x="1183" y="226" style="font-size:50px;fill:#555;letter-spacing:0">,</text>
<text x="1238" y="224" style="font-size:17px;fill:#555;letter-spacing:0">.0</text>
<text x="1227" y="239" style="font-size:17px;fill:#555;letter-spacing:0">.00</text>
<text x="1265" y="224" style="font-size:17px;fill:#555;letter-spacing:0">.00</text>
<text x="1276" y="239" style="font-size:17px;fill:#555;letter-spacing:0">.0</text>
<path class="s" stroke="#3f7fbf" stroke-width="3" d="M1225 218h13M1231 213l-6 5 6 5M1262 234h13M1269 229l6 5-6 5"/>

<!-- styles icons -->
<path class="s" stroke="#9b9b9b" stroke-width="1.500" fill="#fff" d="M1347.500 141.500h48v46h-48z"/>
<rect x="1361" y="142" width="15" height="11" fill="#d9603b"/><rect x="1361" y="153" width="19" height="11" fill="#4a86c0"/><rect x="1361" y="164" width="19" height="11" fill="#d9603b"/><rect x="1361" y="175" width="15" height="12" fill="#4a86c0"/>
<path class="s" stroke="#9b9b9b" stroke-width="1.500" d="M1361 141v46M1376 141v46M1386 141v46M1347 153h48M1347 164h48M1347 175h48"/>
<rect x="1374.500" y="174.500" width="30" height="23" fill="#fff" stroke="#8a8a8a" stroke-width="1.500"/>
<text class="c" x="1389" y="194" style="font-size:22px;fill:#444">≠</text>
<text class="t" x="1312" y="225" textLength="121" lengthAdjust="spacingAndGlyphs">Conditional</text>
<text class="t" x="1307" y="257" textLength="116" lengthAdjust="spacingAndGlyphs">Formatting</text>
<rect x="1484" y="152" width="40" height="38" fill="#bcd0e8"/>
<path class="s" stroke="#9b9b9b" stroke-width="1.500" d="M1468.500 140.500h56v50h-56zM1484 140v50M1497 140v50M1511 140v50M1468 152h56M1468 165h56M1468 178h56"/>
<path d="M1532 153L1517 180L1510 174z" fill="#808080"/>
<path d="M1507 175L1514 181Q1512 197 1490 197Q1493 180 1507 175z" fill="#4a86c0"/>
<text class="t" x="1446" y="225" textLength="103" lengthAdjust="spacingAndGlyphs">Format as</text>
<text class="t" x="1462" y="257" textLength="54" lengthAdjust="spacingAndGlyphs">Table</text>

<!-- gallery -->
<rect x="1553" y="134" width="1092" height="123" fill="#fff" stroke="#c6c6c6" stroke-width="2"/>
<rect x="1553" y="140" width="213" height="56" fill="#c4c4c4"/>
<rect x="1560" y="146" width="200" height="44" fill="#fff"/>
<rect x="1772" y="146" width="200" height="44" fill="#ffc7ce"/>
<rect x="1984" y="146" width="200" height="44" fill="#c6efce"/>
<rect x="2196" y="146" width="200" height="44" fill="#ffeb9c"/>
<rect x="2408.500" y="146.500" width="199" height="43" fill="#f2f2f2" stroke="#7f7f7f" stroke-width="1.500"/>
<rect x="1560" y="202" width="200" height="44" fill="#3f3f3f"/>
<rect x="1562" y="204" width="196" height="40" fill="#a5a5a5" stroke="#fff" stroke-width="0"/>
<path class="s" stroke="#d0d0d0" stroke-width="1" d="M1562 205H1758M1562 243H1758"/>
<rect x="1984.500" y="202.500" width="199" height="43" fill="#ffcc99" stroke="#7f7f7f" stroke-width="1.500"/>
<path class="s" stroke="#fa7d00" stroke-width="1.500" d="M2196 243H2396M2196 246H2396"/>
<rect x="2408.500" y="202.500" width="199" height="43" fill="#ffffcc" stroke="#b2b2b2" stroke-width="1.500"/>
<text class="t" x="1570" y="176" textLength="85" lengthAdjust="spacingAndGlyphs" style="fill:#000">Normal</text>
<text class="t" x="1781" y="176" textLength="43" lengthAdjust="spacingAndGlyphs" style="fill:#9c0006">Bad</text>
<text class="t" x="1993" y="176" textLength="62" lengthAdjust="spacingAndGlyphs" style="fill:#006100">Good</text>
<text class="t" x="2205" y="176" textLength="87" lengthAdjust="spacingAndGlyphs" style="fill:#9c5700">Neutral</text>
<text class="t" x="2415" y="176" textLength="135" lengthAdjust="spacingAndGlyphs" style="fill:#fa7d00;font-weight:bold">Calculation</text>
<text class="t" x="1569" y="232" textLength="121" lengthAdjust="spacingAndGlyphs" style="fill:#fff;font-weight:bold">Check Cell</text>
<text class="t" x="1781" y="232" textLength="167" lengthAdjust="spacingAndGlyphs" style="fill:#7f7f7f;font-style:italic">Explanatory ...</text>
<text class="t" x="1993" y="232" textLength="60" lengthAdjust="spacingAndGlyphs" style="fill:#3f3f76">Input</text>
<text class="t" x="2205" y="232" textLength="123" lengthAdjust="spacingAndGlyphs" style="fill:#fa7d00">Linked Cell</text>
<text class="t" x="2418" y="232" textLength="56" lengthAdjust="spacingAndGlyphs" style="fill:#000">Note</text>
<rect x="2616" y="135" width="29" height="41" fill="#e2e2e2"/>
<rect x="2616" y="176" width="29" height="38" fill="#fff"/>
<rect x="2616" y="214" width="29" height="42" fill="#fff"/>
<path class="s" stroke="#c6c6c6" stroke-width="1.500" d="M2616 134V257M2616 176H2645M2616 214H2645"/>
<path d="M2625 158h11l-5.500-7z" fill="#bdbdbd"/><path d="M2625 192h11l-5.500 7z" fill="#666"/>
<path d="M2625 229h11v2h-11zM2625 235h11l-5.500 7z" fill="#777"/>

<!-- cells -->
<path class="s" stroke="#7a7a7a" stroke-width="1.500" d="M2668.500 138.500h30v25h-30zM2683.500 138v25M2668.500 171.500h30v21h-30zM2683.500 171v22M2668.500 182h30"/>
<rect x="2690" y="154" width="29" height="27" fill="#bcd0e8" stroke="#4a86c0" stroke-width="1.500"/>
<path d="M2665 160l9-9v6h10v6h-10v6z" fill="#4a86c0"/>
<text class="t" x="2665" y="225" textLength="58" lengthAdjust="spacingAndGlyphs">Insert</text>
<path class="s" stroke="#7a7a7a" stroke-width="1.500" d="M2740.500 138.500h30v25h-30zM2755.500 138v25M2740.500 171.500h30v21h-30zM2755.500 171v22M2740.500 182h30"/>
<rect x="2751" y="154" width="22" height="27" fill="#bcd0e8"/>
<path d="M2773 154l8 8-8 8z" fill="#9dbde0"/>
<path class="s" stroke="#d9603b" stroke-width="5" d="M2776 151l20 26M2796 151l-21 26"/>
<text class="t" x="2734" y="225" textLength="64" lengthAdjust="spacingAndGlyphs">Delete</text>
<path class="s" stroke="#9b9b9b" stroke-width="1.500" d="M2820.500 148.500h51v38h-51zM2834 148v38M2849 148v38M2861 148v38M2820 158h52M2820 176h52"/>
<rect x="2834" y="158" width="15" height="18" fill="#4a86c0"/>
<path class="s" stroke="#4a86c0" stroke-width="2" d="M2824 142h38M2830 138l-6 4 6 4M2856 138l6 4-6 4"/>
<path class="s" stroke="#7a7a7a" stroke-width="1.500" d="M2822 186l2 7h12l4-7M2844 186l2 7h10l4-7"/>
<text class="t" x="2810" y="225" textLength="73" lengthAdjust="spacingAndGlyphs">Format</text>

<!-- editing -->
<path class="s" stroke="#555" stroke-width="3.500" d="M2927 139h-23l10 12-10 11h23"/>
<text class="t" x="2934" y="159" textLength="97" lengthAdjust="spacingAndGlyphs">AutoSum</text>
<rect x="2901" y="176" width="25" height="26" fill="#fff" stroke="#7a7a7a" stroke-width="1.500"/>
<rect x="2900" y="175" width="27" height="6" fill="#666"/>
<path class="s" stroke="#3f7fbf" stroke-width="3" d="M2913 183V198M2907 192l6 6 6-6"/>
<text class="t" x="2934" y="198" textLength="28" lengthAdjust="spacingAndGlyphs">Fill</text>
<path d="M2903 232L2917 216L2927 223L2912 239z" fill="#e8869a"/>
<text class="t" x="2934" y="237" textLength="53" lengthAdjust="spacingAndGlyphs">Clear</text>
<text x="3067" y="162" textLength="19" lengthAdjust="spacingAndGlyphs" style="font-size:27px;fill:#4a7fba">A</text>
<text x="3067" y="191" textLength="19" lengthAdjust="spacingAndGlyphs" style="font-size:30px;font-weight:bold;fill:#8f5bb5">Z</text>
<path d="M3090 154H3122L3110 172V186H3103V172z" fill="#808080"/>
<circle cx="3181" cy="156" r="15" fill="#fff" stroke="#4a86c0" stroke-width="5" transform="rotate(15 3181 156)"/>
<path class="s" stroke="#4a86c0" stroke-width="6" d="M3171 171L3152 190"/>
<text class="t" x="3060" y="225" textLength="68" lengthAdjust="spacingAndGlyphs">Sort &amp;</text>
<text class="t" x="3140" y="225" textLength="71" lengthAdjust="spacingAndGlyphs">Find &amp;</text>
<text class="t" x="3060" y="257" textLength="52" lengthAdjust="spacingAndGlyphs">Filter</text>
<text class="t" x="3135" y="257" textLength="64" lengthAdjust="spacingAndGlyphs">Select</text>

<!-- small dropdown arrows -->
<path fill="#6a6a6a" d="M37 245h8l-4 6zM183 195h8l-4 6zM432 165h9l-4.500 6zM525 165h9l-4.500 6zM405 223h8l-4 6zM469 223h8l-4 6zM533 223h8l-4 6zM588 223h8l-4 6zM789 166h8l-4 6zM1056 223h8l-4 6zM1281 165h9l-4.500 6zM1121 223h8l-4 6zM1431 246h8l-4 6zM1524 246h8l-4 6zM2690 246h8l-4 6zM2764 246h8l-4 6zM2842 246h8l-4 6zM3043 148h8l-4 6zM2972 187h8l-4 6zM2995 226h8l-4 6zM3120 246h8l-4 6zM3206 246h8l-4 6z"/>

<!-- ======= title bar ======= -->
<rect x="0" y="0" width="3840" height="128" fill="#217346"/>
<rect x="120" y="68" width="114" height="60" fill="#f3f3f3"/>
<g clip-path="url(#tb)" fill="none" stroke="#1e6b41" stroke-width="8">
<path d="M2860 29H3204M3214 29H3254L3302 104"/><circle cx="2855" cy="29" r="7"/><circle cx="3209" cy="29" r="7"/>
<path d="M2992 67H3181L3232 110"/><circle cx="2985" cy="67" r="7"/>
<path d="M3055 110L3082 87H3260M3274 87H3290L3310 110"/><circle cx="3267" cy="87" r="7"/>
<circle cx="2893" cy="84" r="38" stroke-width="9"/>
<path d="M2882 122V72H2912M2884 74L2915 110" stroke-width="8"/>
<circle cx="3397" cy="35" r="55" stroke-width="9"/>
<path d="M3385 6H3416V62M3415 8L3375 60" stroke-width="8"/>
<path d="M3577 110L3624 50H3834M3740 110L3840 -12" stroke-width="9"/>
</g>
<path d="M1680 0h95v2h-95z" fill="#444"/><path d="M1775 0h385v2h-385z" fill="#e6e6e6"/>
<!-- QAT -->
<path d="M41 18H66V43H41z" fill="#217346" stroke="#fff" stroke-width="2.500"/>
<path d="M45 32H62V43H45z" fill="#fff"/><rect x="50" y="35" width="3" height="8" fill="#217346"/>
<g fill="none" stroke="#5b9a78" stroke-width="3">
<path d="M100 25H112a8.500 8.500 0 0 1 0 17H106"/><path d="M106 18L99 25L106 32"/>
<path d="M193 25H181a8.500 8.500 0 0 0 0 17H187"/><path d="M187 18L194 25L187 32"/>
</g>
<path d="M139 28h9l-4.500 6zM208 28h9l-4.500 6z" fill="#5b9a78"/>
<path d="M243 25h8v2h-8zM243 29h8l-4 6z" fill="#fff"/>
<text class="w" x="1739" y="41" textLength="361" lengthAdjust="spacingAndGlyphs">Pen_Calc_2.0_release.xlsm  -  Excel</text>
<text class="w" x="41" y="107" textLength="35" lengthAdjust="spacingAndGlyphs">File</text>
<text class="w" x="145" y="107" textLength="63" lengthAdjust="spacingAndGlyphs" style="fill:#217346">Home</text>
<text class="w" x="261" y="107" textLength="58" lengthAdjust="spacingAndGlyphs">Insert</text>
<text class="w" x="371" y="107" textLength="129" lengthAdjust="spacingAndGlyphs">Page Layout</text>
<text class="w" x="551" y="107" textLength="96" lengthAdjust="spacingAndGlyphs">Formulas</text>
<text class="w" x="699" y="107" textLength="47" lengthAdjust="spacingAndGlyphs">Data</text>
<text class="w" x="798" y="107" textLength="75" lengthAdjust="spacingAndGlyphs">Review</text>
<text class="w" x="923" y="107" textLength="51" lengthAdjust="spacingAndGlyphs">View</text>
<text class="w" x="1026" y="107" textLength="110" lengthAdjust="spacingAndGlyphs">Developer</text>
<text class="w" x="1187" y="107" textLength="49" lengthAdjust="spacingAndGlyphs">Help</text>
<path d="M1284 103C1284 97 1279 95 1279 90A10 10 0 1 1 1298 90C1298 95 1293 97 1293 103zM1285 107h7M1285 112h7" fill="none" stroke="#fff" stroke-width="2"/>
<text class="w" x="1308" y="107" textLength="307" lengthAdjust="spacingAndGlyphs">Tell me what you want to do</text>
<rect x="3396" y="8" width="116" height="38" fill="#fff" rx="1"/>
<text class="w" x="3417" y="37" textLength="74" lengthAdjust="spacingAndGlyphs" style="fill:#217346">Sign in</text>
<g fill="none" stroke="#fff" stroke-width="2">
<path d="M3558 18H3582V37H3558zM3558 23H3582M3570 35V26M3565 30L3570 25L3575 30"/>
<path d="M3636 27H3658" stroke-width="2.500"/>
<path d="M3714 22H3728V37H3714zM3719 22V18H3733V32H3728"/>
<path d="M3791 17L3811 37M3811 17L3791 37"/>
<circle cx="3732" cy="88" r="7"/><path d="M3720 110V104C3720 98 3726 95 3732 95M3740 96V110M3733 103H3748"/>
</g>
<text class="w" x="3756" y="107" textLength="59" lengthAdjust="spacingAndGlyphs">Share</text>

<!-- ======= vertical scrollbar ======= -->
<rect x="3802" y="384" width="38" height="1690" fill="#dadada"/>
<rect x="3804" y="385" width="32" height="32" fill="#fff" stroke="#b5b5b5" stroke-width="1"/>
<path d="M3811 406h18l-9-13z" fill="#7a7a7a"/>
<rect x="3804" y="419" width="32" height="276" fill="#fff" stroke="#b5b5b5" stroke-width="1"/>
<rect x="3804" y="2042" width="32" height="31" fill="#fff" stroke="#b5b5b5" stroke-width="1"/>
<path d="M3813 2054h14l-7 10z" fill="#7a7a7a"/>

<!-- ======= tab bar ======= -->
<rect x="0" y="2072" width="3840" height="44" fill="#e6e6e6"/>
<path class="s" stroke="#9b9b9b" stroke-width="2" d="M0 2072.500H3802"/>
<path class="s" stroke="#c6c6c6" stroke-width="2" d="M0 2115H3840"/>
<path d="M42 2086l-5 7 5 7zM77 2086l5 7-5 7z" fill="#bdbdbd"/>
<path class="s" stroke="#b5b5b5" stroke-width="1.500" d="M145 2076V2110M547.500 2076V2110M757 2076V2110"/>
<rect x="244" y="2072" width="154" height="38" fill="#fff"/>
<rect x="243" y="2110" width="156" height="3" fill="#217346"/>
<path class="s" stroke="#9b9b9b" stroke-width="1.500" d="M244 2072V2110M398 2072V2110"/>
<text x="160" y="2101" textLength="68" lengthAdjust="spacingAndGlyphs" style="font-size:25px;fill:#444">DATA</text>
<text class="b" x="255" y="2101" textLength="132" lengthAdjust="spacingAndGlyphs" style="font-size:25px;fill:#217346">Calculator</text>
<text x="416" y="2101" textLength="114" lengthAdjust="spacingAndGlyphs" style="font-size:25px;fill:#444">Simulator</text>
<text x="566" y="2101" textLength="173" lengthAdjust="spacingAndGlyphs" style="font-size:25px;fill:#444">Head-to-Head</text>
<circle cx="823" cy="2095" r="15.500" fill="none" stroke="#8a8a8a" stroke-width="2"/>
<path class="s" stroke="#8a8a8a" stroke-width="4" d="M815 2095h16M823 2087v16"/>
<path d="M2300 2085h4v6h-4zM2300 2095h4v6h-4zM2300 2105h4v6h-4z" fill="#b5b5b5"/>
<rect x="2326" y="2077" width="1476" height="33" fill="#dadada"/>
<rect x="2326" y="2077" width="32" height="32" fill="#fff"/>
<rect x="2358" y="2077" width="428" height="32" fill="#fff" stroke="#b5b5b5" stroke-width="1"/>
<rect x="3768.500" y="2077.500" width="33" height="32" fill="#fff" stroke="#b5b5b5" stroke-width="1"/>
<path d="M2345 2086l-6 8 6 8zM3783 2086l6 8-6 8z" fill="#7a7a7a"/>

<!-- ======= status bar ======= -->
<rect x="0" y="2116" width="3840" height="42" fill="#f3f3f3"/>
<rect x="0" y="2158" width="3840" height="2" fill="#3a3a3a"/>
<text x="9" y="2143" textLength="54" lengthAdjust="spacingAndGlyphs" style="font-size:23px;fill:#444">Ready</text>
<rect x="93" y="2125" width="21" height="8" fill="#555"/><circle cx="93" cy="2129" r="4" fill="#555"/>
<rect x="90.500" y="2133.500" width="23" height="15" fill="#fff" stroke="#666" stroke-width="1"/>
<path class="s" stroke="#777" stroke-width="1.500" stroke-dasharray="3 1.500" d="M93 2137h18M93 2141h18M93 2145h18"/>
<rect x="3361" y="2116" width="52" height="42" fill="#c4c4c4"/>
<path class="s" stroke="#777" stroke-width="1.500" d="M3375.500 2125.500h24v25h-24zM3375 2134h25M3375 2142h25M3383.500 2125v25M3391.500 2125v25"/>
<path class="s" stroke="#777" stroke-width="1.500" d="M3427.500 2125.500h24v25h-24zM3433.500 2131h12v14h-12z"/>
<path class="s" stroke="#777" stroke-width="1.500" stroke-dasharray="1.500 2" d="M3435 2134h9M3435 2138h9M3435 2142h9"/>
<path class="s" stroke="#777" stroke-width="1.500" d="M3479.500 2125v14M3479.500 2140v10h24M3479 2140h20M3486 2125v14M3494 2125v14M3499.500 2125v14"/>
<rect x="3528" y="2133" width="8" height="8" fill="#666"/>
<rect x="3548" y="2136" width="196" height="3" fill="#b5b5b5"/>
<rect x="3641" y="2125" width="8" height="24" fill="#666"/>
<path class="s" stroke="#666" stroke-width="3" d="M3753 2137h14M3760 2130v14"/>
<text x="3783" y="2146" textLength="50" lengthAdjust="spacingAndGlyphs" style="font-size:23px;fill:#444">100%</text>
</svg>
</body></html>
